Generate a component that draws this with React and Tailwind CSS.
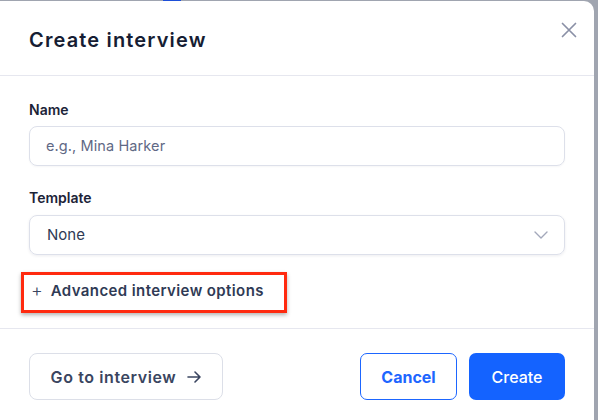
import React from "react";

const font = { fontFamily: "Inter, 'Noto Sans', sans-serif" };

function CloseIcon() {
  return (
    <svg width="16" height="16" viewBox="0 0 16 16" fill="none" stroke="#8a90a6" strokeWidth="1.7" strokeLinecap="round">
      <path d="M1.5 1.5L14.5 14.5M14.5 1.5L1.5 14.5" />
    </svg>
  );
}

function Chevron() {
  return (
    <svg width="14" height="8" viewBox="0 0 14 8" fill="none" stroke="#a3a8ba" strokeWidth="1.4" strokeLinecap="round" strokeLinejoin="round">
      <path d="M1 1L7 7L13 1" />
    </svg>
  );
}

function Arrow() {
  return (
    <svg width="14" height="12" viewBox="0 0 14 12" fill="none" stroke="#3a4560" strokeWidth="1.6" strokeLinecap="round" strokeLinejoin="round">
      <path d="M1 6H13M8 1L13 6L8 11" />
    </svg>
  );
}

export default function App() {
  return (
    <div className="w-[598px] h-[420px] bg-[#a0a5b0] overflow-hidden relative" style={font}>
      <div className="absolute left-[163px] top-0 w-[18px] h-[1px] bg-[#1d4fd8]" />
      <div className="mt-[1px] w-[594px] h-[419px] bg-white rounded-tr-[10px] flex flex-col">
        {/* header */}
        <div className="h-[75px] flex items-start justify-between pl-[29px] pr-[17px] border-b border-[#e6e7ef]">
          <h2 className="mt-[27px] text-[20px] leading-[24px] font-semibold text-[#161d33] tracking-[1.15px]">Create interview</h2>
          <button className="mt-[21px]">
            <CloseIcon />
          </button>
        </div>

        {/* body */}
        <div className="px-[29px] pt-[25px] border-b border-[#e6e7ef] h-[253px]">
          <label className="block text-[14px] leading-[18px] font-semibold text-[#1c2338]">Name</label>
          <div className="mt-[7px] h-[40px] w-[536px] rounded-[8px] border border-[#dde0ea] flex items-center pl-[16px] shadow-[0_1px_2px_rgba(20,30,60,0.04)]">
            <span className="text-[14.5px] text-[#5f6985] tracking-[0.1px]">e.g., Mina Harker</span>
          </div>

          <label className="block mt-[23px] text-[14px] leading-[18px] font-semibold text-[#1c2338]">Template</label>
          <div className="mt-[8px] h-[40px] w-[536px] rounded-[8px] border border-[#dde0ea] flex items-center justify-between pl-[17px] pr-[16px] shadow-[0_1px_3px_rgba(20,30,60,0.08)]">
            <span className="text-[15px] text-[#2f3a55]">None</span>
            <Chevron />
          </div>

          <div className="relative mt-[26px] flex items-center gap-[8px] pl-[2px] h-[20px]">
            <span className="text-[18px] leading-none text-[#3a4560] font-light">+</span>
            <span className="text-[15px] leading-[20px] font-semibold text-[#2f3a55] tracking-[0.4px]">Advanced interview options</span>
            <div className="absolute left-[-8px] top-[-9px] w-[266px] h-[41px] border-[3px] border-[#ff2a0f] shadow-[0_2px_4px_rgba(0,0,0,0.3)]" />
          </div>
        </div>

        {/* footer */}
        <div className="flex items-center justify-between pl-[29px] pr-[29px] pt-[24px]">
          <button className="h-[47px] w-[194px] rounded-[8px] border border-[#dcdfe8] flex items-center justify-center gap-[11px] text-[16px] font-semibold text-[#3a4560] tracking-[0.6px]">
            Go to interview <Arrow />
          </button>
          <div className="flex gap-[12px]">
            <button className="h-[47px] w-[97px] rounded-[7px] border border-[#1d66ff] text-[16px] font-bold text-[#1d66ff]">Cancel</button>
            <button className="h-[47px] w-[96px] rounded-[7px] bg-[#1463ff] text-[16px] font-medium text-white">Create</button>
          </div>
        </div>
      </div>
    </div>
  );
}
